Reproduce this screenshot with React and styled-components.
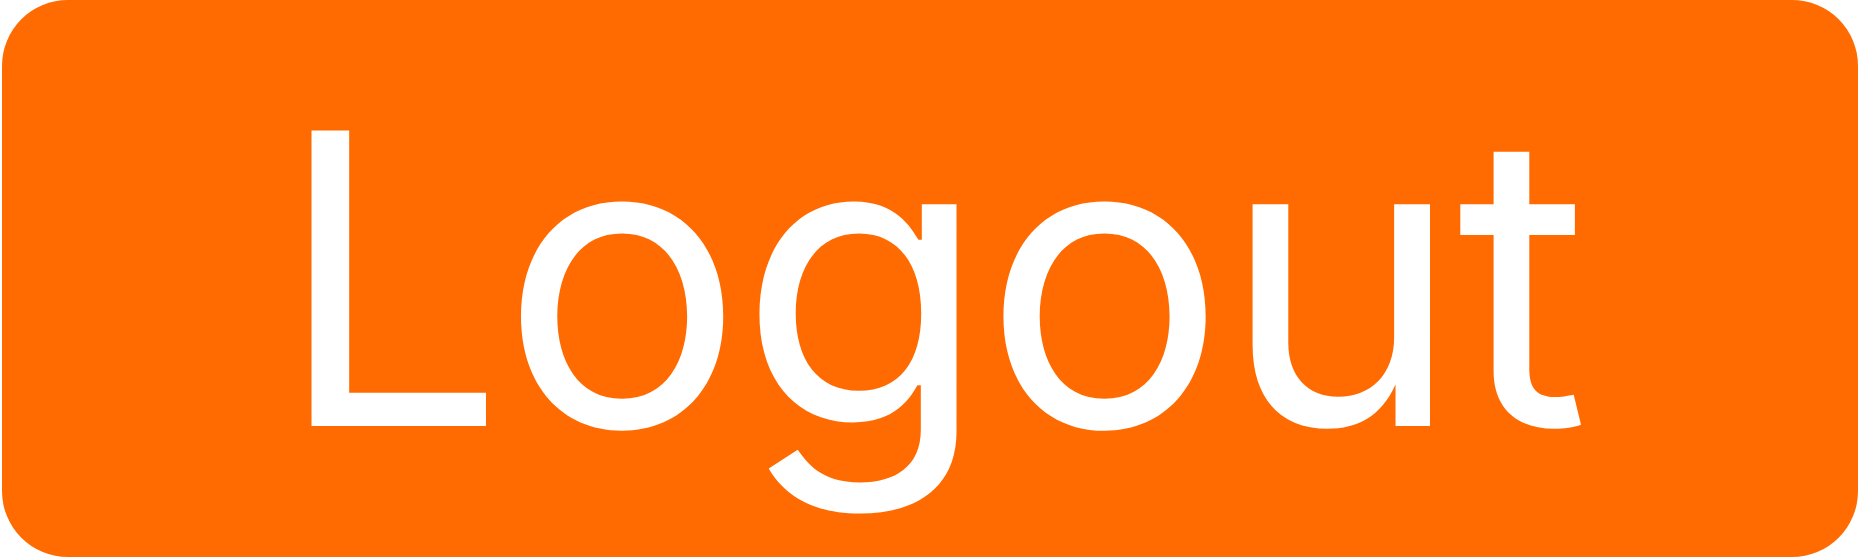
import React from "react";
import styled, { createGlobalStyle } from "styled-components";

const GlobalStyle = createGlobalStyle`
  html, body {
    margin: 0;
    padding: 0;
    background: #ffffff;
  }
`;

const Page = styled.div`
  width: 1861px;
  height: 559px;
  display: flex;
  align-items: flex-start;
  padding-left: 2px;
  box-sizing: border-box;
`;

const LogoutButton = styled.button`
  width: 1856px;
  height: 557px;
  display: flex;
  align-items: center;
  justify-content: center;
  padding: 0;
  border: none;
  border-radius: 66px;
  background: #ff6b00;
  color: #ffffff;
  font-family: Inter, "Noto Sans", sans-serif;
  font-size: 406px;
  font-weight: 400;
  letter-spacing: -5px;
  line-height: normal;
  cursor: pointer;
`;

const App = () => {
  return (
    <>
      <GlobalStyle />
      <Page>
        <LogoutButton>Logout</LogoutButton>
      </Page>
    </>
  );
};

export default App;
